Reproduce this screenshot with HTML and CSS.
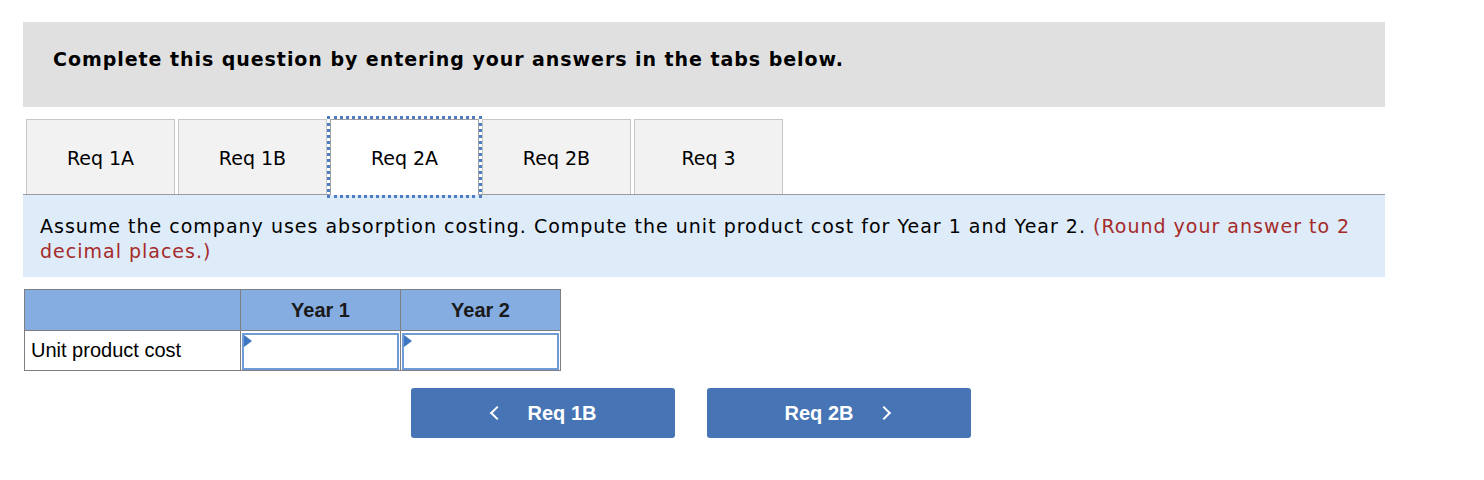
FILE: index.html
```html
<!DOCTYPE html>
<html>
<head>
<meta charset="utf-8">
<link rel="stylesheet" href="styles.css">
</head>
<body>
<div class="wrap">
  <div class="banner">Complete this question by entering your answers in the tabs below.</div>
  <div class="tabs">
    <div class="tab">Req 1A</div>
    <div class="tab">Req 1B</div>
    <div class="tab active">Req 2A</div>
    <div class="tab">Req 2B</div>
    <div class="tab">Req 3</div>
  </div>
  <div class="prompt">Assume the company uses absorption costing. Compute the unit product cost for Year 1 and Year 2. <span class="red">(Round your answer to 2 decimal places.)</span></div>
  <table class="grid">
    <tr class="head">
      <th class="c0"></th>
      <th class="c1">Year 1</th>
      <th class="c2">Year 2</th>
    </tr>
    <tr class="body">
      <td class="label">Unit product cost</td>
      <td class="cell"><div class="inp"><span class="flag"></span></div></td>
      <td class="cell"><div class="inp"><span class="flag"></span></div></td>
    </tr>
  </table>
  <div class="nav">
    <div class="btn"><span class="chev left"></span><span>Req 1B</span></div>
    <div class="btn"><span>Req 2B</span><span class="chev right"></span></div>
  </div>
</div>
</body>
</html>
```
FILE: styles.css
```css
html, body { margin: 0; padding: 0; background: #fff; }
.wrap { padding: 22px 0 0 23px; width: 1362px; font-family: "DejaVu Sans", Verdana, sans-serif; color: #000; }
.banner { background: #e0e0e0; height: 85px; box-sizing: border-box; padding: 26px 0 0 30px; font-weight: bold; font-size: 19px; letter-spacing: 0.95px; }
.tabs { display: flex; gap: 3px; margin-top: 12px; padding-left: 3px; border-bottom: 1px solid #9a9a9a; height: 75px; }
.tab { width: 149px; height: 75px; box-sizing: border-box; background: #f2f2f2; border: 1px solid #c6c6c6; border-bottom: none; display: flex; align-items: center; justify-content: center; font-size: 19px; padding-top: 1px; }
.tab.active { background: #fff; border-color: #a0a0a0; height: 76px; outline: 3px dotted #4d7cc3; outline-offset: 0; position: relative; z-index: 1; }
.prompt { background: #deebf8; height: 82px; box-sizing: border-box; padding: 19px 17px 0 17px; font-size: 19px; letter-spacing: 1px; line-height: 25px; }
.red { color: #a52a2a; }
.grid { border-collapse: collapse; margin-top: 12px; margin-left: 1px; font-family: "Liberation Sans", Arial, sans-serif; font-size: 20px; }
.grid th, .grid td { border: 1px solid #7f7f7f; padding: 0; }
.head th { background: #85ade1; height: 40px; font-weight: bold; color: #1a1a1a; }
.c0 { width: 215px; }
.c1, .c2 { width: 159px; }
.body td { height: 39px; }
.label { padding-left: 6px !important; text-align: left; }
.cell { position: relative; }
.inp { position: relative; margin: 1px 1px 0 1px; height: 37px; box-sizing: border-box; border: 2px solid #6f9bd9; background: #fff; }
.flag { position: absolute; left: 0; top: 0; width: 0; height: 0; border-top: 6px solid transparent; border-bottom: 6px solid transparent; border-left: 8px solid #3f75c2; }
.nav { display: flex; gap: 32px; margin-top: 17px; margin-left: 388px; }
.btn { width: 264px; height: 50px; background: #4674b4; border-radius: 3px; color: #fff; font-family: "Liberation Sans", Arial, sans-serif; font-weight: bold; font-size: 20px; display: flex; align-items: center; justify-content: center; gap: 26px; }
.chev { width: 8px; height: 8px; border-left: 2px solid #fff; border-bottom: 2px solid #fff; display: inline-block; }
.chev.left { transform: rotate(45deg); margin-left: 2px; }
.chev.right { transform: rotate(-135deg); margin-right: 4px; }
```
